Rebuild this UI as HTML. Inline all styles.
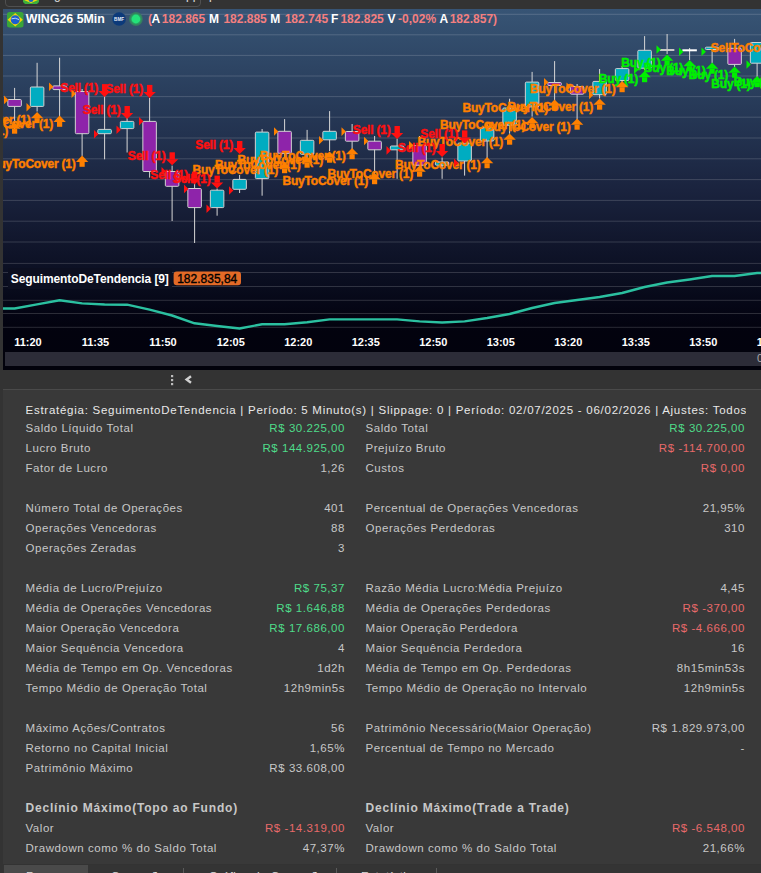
<!DOCTYPE html>
<html><head><meta charset="utf-8">
<style>
*{margin:0;padding:0;box-sizing:border-box}
html,body{width:761px;height:873px;overflow:hidden;background:#333333;font-family:"Liberation Sans",sans-serif}
#top{position:absolute;left:3px;top:0;width:758px;height:9px;background:#333333}
#tab{position:absolute;left:2px;top:-10px;width:195.5px;height:16.5px;border:1px solid #505050;border-radius:0 0 4px 4px}
#chart{position:absolute;left:3px;top:9px;width:758px;height:361px;background:#02020c;overflow:hidden}
#plot{position:absolute;left:0;top:0;width:758px;height:343px;background:linear-gradient(to bottom,rgb(55,84,117) 0%,rgb(53,81,113) 3.8%,rgb(39,58,88) 28.3%,rgb(26,35,62) 52.8%,rgb(15,20,41) 70.8%,rgb(10,14,32) 79%,rgb(5,6,21) 86.9%,rgb(2,2,14) 94%,rgb(2,2,13) 100%)}
#sb{position:absolute;left:2px;top:343px;width:756px;height:14px;background:#2c2c38}
svg{position:absolute;left:0;top:0}
.lb{font:bold 12px "Liberation Sans",sans-serif;letter-spacing:-0.2px;stroke-width:0.45px}
.ib{font:bold 12px "Liberation Sans",sans-serif;letter-spacing:-0.1px}
.bd{font:12px "Liberation Sans",sans-serif;letter-spacing:0px;stroke-width:0.35px}
.tm{font:bold 11px "Liberation Sans",sans-serif}
#title{position:absolute;left:0;top:0;height:20px;width:761px;font:bold 12px "Liberation Sans",sans-serif;white-space:nowrap}
#title span{position:absolute;top:11.5px;line-height:14px}
.wt{color:#ffffff} .sm{color:#f47f7f}
#mid{position:absolute;left:3px;top:370px;width:758px;height:19px;background:#333333}
#sep{position:absolute;left:3px;top:388.9px;width:758px;height:1.2px;background:#4a4a4a}
#rep{position:absolute;left:3px;top:390.1px;width:758px;height:474.4px;background:#393939}
#tabs{position:absolute;left:3px;top:864.5px;width:758px;height:9px;background:#343434}
.rw{position:absolute;left:0;width:761px;height:18px;font-size:11.5px;letter-spacing:0.55px;color:#c8c8c8;white-space:nowrap;line-height:18px}
.rw span{position:absolute;top:0}
.l1{left:25.5px} .l2{left:365.5px}
.v1{right:416px;text-align:right} .v2{right:16px;text-align:right}
.tt{position:absolute;top:4.3px;font-size:11.5px;line-height:14px;color:#dddddd;white-space:nowrap;letter-spacing:0.5px}
.g{color:#4fdc8a} .r{color:#e86a6a} .n{color:#c8c8c8}
b{font-weight:bold;font-size:12px;letter-spacing:0.8px}
#hdr{position:absolute;left:25.5px;top:401.2px;width:720px;height:18px;overflow:hidden;font-size:11.5px;letter-spacing:0.735px;color:#e8e8e8;white-space:nowrap;line-height:18px}
</style></head><body>
<div id="top"><div id="tab"></div>
<svg width="761" height="9" style="left:-3px"><polygon points="23,-4 39,-4 39,2 37,4 25,4 23,2" fill="#3cae3c"/><polygon points="24,0 31,-4 38,0 31,3" fill="#f5d90a"/><circle cx="31" cy="-0.5" r="2.5" fill="#1a5fc8"/><text x="54" y="-1" fill="#e0e0e0" style="font:12px 'Liberation Sans',sans-serif">g</text><text x="186" y="-1" fill="#e0e0e0" style="font:12px 'Liberation Sans',sans-serif">pp</text><text x="209" y="-1" fill="#e0e0e0" style="font:12px 'Liberation Sans',sans-serif">p</text></svg>
</div>
<div id="chart">
<div id="plot"></div>
<div id="sb"></div>
</div>
<svg width="761" height="370" viewBox="0 0 761 370" style="left:0;top:0">
<defs><clipPath id="cp"><rect x="3" y="9" width="758" height="343"/></clipPath></defs>
<g clip-path="url(#cp)">
<rect x="3" y="13.8" width="758" height="1" fill="#ffffff" fill-opacity="0.16"/>
<rect x="3" y="34.3" width="758" height="1" fill="#ffffff" fill-opacity="0.16"/>
<rect x="3" y="54.9" width="758" height="1" fill="#ffffff" fill-opacity="0.16"/>
<rect x="3" y="75.5" width="758" height="1" fill="#ffffff" fill-opacity="0.16"/>
<rect x="3" y="96.1" width="758" height="1" fill="#ffffff" fill-opacity="0.16"/>
<rect x="3" y="116.7" width="758" height="1" fill="#ffffff" fill-opacity="0.16"/>
<rect x="3" y="137.5" width="758" height="1" fill="#ffffff" fill-opacity="0.16"/>
<rect x="3" y="158.3" width="758" height="1" fill="#ffffff" fill-opacity="0.16"/>
<rect x="3" y="179.1" width="758" height="1" fill="#ffffff" fill-opacity="0.16"/>
<rect x="3" y="199.9" width="758" height="1" fill="#ffffff" fill-opacity="0.16"/>
<rect x="3" y="220.7" width="758" height="1" fill="#ffffff" fill-opacity="0.16"/>
<rect x="3" y="241.5" width="758" height="1" fill="#ffffff" fill-opacity="0.16"/>
<rect x="3" y="262.9" width="758" height="1" fill="#ffffff" fill-opacity="0.16"/>
<rect x="3" y="272" width="758" height="1" fill="#ffffff" fill-opacity="0.16"/>
<rect x="3" y="286" width="758" height="1" fill="#ffffff" fill-opacity="0.16"/>
<rect x="3" y="299.8" width="758" height="1" fill="#ffffff" fill-opacity="0.16"/>
<rect x="3" y="313" width="758" height="1" fill="#ffffff" fill-opacity="0.16"/>
<rect x="3" y="326.8" width="758" height="1" fill="#ffffff" fill-opacity="0.16"/>
<rect x="14.1" y="87.9" width="1" height="42.4" fill="#d6d6d6"/>
<rect x="7.85" y="99.5" width="13.5" height="6.9" rx="1" fill="#8e24aa" stroke="#d2d2d2" stroke-width="1"/>
<rect x="36.6" y="62.8" width="1" height="48.7" fill="#d6d6d6"/>
<rect x="30.35" y="87" width="13.5" height="19.4" rx="1" fill="#00acc1" stroke="#d2d2d2" stroke-width="1"/>
<rect x="59.1" y="57.7" width="1" height="58.9" fill="#d6d6d6"/>
<rect x="52.85" y="85.9" width="13.5" height="3.7" rx="1" fill="#8e24aa" stroke="#d2d2d2" stroke-width="1"/>
<rect x="81.6" y="89" width="1" height="66.9" fill="#d6d6d6"/>
<rect x="75.35" y="91.5" width="13.5" height="42.2" rx="1" fill="#8e24aa" stroke="#d2d2d2" stroke-width="1"/>
<rect x="104.1" y="96" width="1" height="63.3" fill="#d6d6d6"/>
<rect x="97.85" y="129.4" width="13.5" height="4.3" rx="1" fill="#00acc1" stroke="#d2d2d2" stroke-width="1"/>
<rect x="126.6" y="117" width="1" height="35.5" fill="#d6d6d6"/>
<rect x="120.35" y="121.4" width="13.5" height="7.2" rx="1" fill="#00acc1" stroke="#d2d2d2" stroke-width="1"/>
<rect x="149.1" y="98" width="1" height="79.6" fill="#d6d6d6"/>
<rect x="142.85" y="121.4" width="13.5" height="50.1" rx="1" fill="#8e24aa" stroke="#d2d2d2" stroke-width="1"/>
<rect x="171.6" y="165.6" width="1" height="55.4" fill="#d6d6d6"/>
<rect x="165.35" y="171.5" width="13.5" height="14.8" rx="1" fill="#8e24aa" stroke="#d2d2d2" stroke-width="1"/>
<rect x="194.1" y="184" width="1" height="59" fill="#d6d6d6"/>
<rect x="187.85" y="188.5" width="13.5" height="19.1" rx="1" fill="#8e24aa" stroke="#d2d2d2" stroke-width="1"/>
<rect x="216.6" y="188.5" width="1" height="27.2" fill="#d6d6d6"/>
<rect x="210.35" y="190.2" width="13.5" height="17.4" rx="1" fill="#00acc1" stroke="#d2d2d2" stroke-width="1"/>
<rect x="239.1" y="175" width="1" height="18" fill="#d6d6d6"/>
<rect x="232.85" y="179.4" width="13.5" height="9.9" rx="1" fill="#00acc1" stroke="#d2d2d2" stroke-width="1"/>
<rect x="261.6" y="129" width="1" height="66.7" fill="#d6d6d6"/>
<rect x="255.35" y="132.1" width="13.5" height="46.5" rx="1" fill="#00acc1" stroke="#d2d2d2" stroke-width="1"/>
<rect x="284.1" y="119.1" width="1" height="38.9" fill="#d6d6d6"/>
<rect x="277.85" y="131.3" width="13.5" height="22" rx="1" fill="#8e24aa" stroke="#d2d2d2" stroke-width="1"/>
<rect x="306.6" y="129.9" width="1" height="28.1" fill="#d6d6d6"/>
<rect x="300.35" y="140.3" width="13.5" height="14" rx="1" fill="#00acc1" stroke="#d2d2d2" stroke-width="1"/>
<rect x="329.1" y="111.1" width="1" height="39.9" fill="#d6d6d6"/>
<rect x="322.85" y="131.3" width="13.5" height="8.5" rx="1" fill="#00acc1" stroke="#d2d2d2" stroke-width="1"/>
<rect x="351.6" y="124" width="1" height="34.3" fill="#d6d6d6"/>
<rect x="345.35" y="131.5" width="13.5" height="9.7" rx="1" fill="#8e24aa" stroke="#d2d2d2" stroke-width="1"/>
<rect x="374.1" y="136" width="1" height="37.7" fill="#d6d6d6"/>
<rect x="367.85" y="141.2" width="13.5" height="8.6" rx="1" fill="#8e24aa" stroke="#d2d2d2" stroke-width="1"/>
<rect x="396.6" y="138.7" width="1" height="40.1" fill="#d6d6d6"/>
<rect x="390.35" y="146" width="13.5" height="3.8" rx="1" fill="#00acc1" stroke="#d2d2d2" stroke-width="1"/>
<rect x="419.1" y="136" width="1" height="32" fill="#d6d6d6"/>
<rect x="412.85" y="145.5" width="13.5" height="19.7" rx="1" fill="#8e24aa" stroke="#d2d2d2" stroke-width="1"/>
<rect x="441.6" y="157.5" width="1" height="21.3" fill="#d6d6d6"/>
<rect x="435.35" y="162" width="13.5" height="3.2" rx="1" fill="#00acc1" stroke="#d2d2d2" stroke-width="1"/>
<rect x="464.1" y="138.8" width="1" height="36.8" fill="#d6d6d6"/>
<rect x="457.85" y="143.1" width="13.5" height="17.9" rx="1" fill="#00acc1" stroke="#d2d2d2" stroke-width="1"/>
<rect x="486.6" y="125" width="1" height="34.3" fill="#d6d6d6"/>
<rect x="480.35" y="127.7" width="13.5" height="13.3" rx="1" fill="#00acc1" stroke="#d2d2d2" stroke-width="1"/>
<rect x="509.1" y="98.7" width="1" height="35" fill="#d6d6d6"/>
<rect x="502.85" y="108" width="13.5" height="17.2" rx="1" fill="#00acc1" stroke="#d2d2d2" stroke-width="1"/>
<rect x="531.6" y="71.9" width="1" height="44.7" fill="#d6d6d6"/>
<rect x="525.35" y="82.1" width="13.5" height="24.8" rx="1" fill="#00acc1" stroke="#d2d2d2" stroke-width="1"/>
<rect x="554.1" y="61.1" width="1" height="39.9" fill="#d6d6d6"/>
<rect x="547.85" y="82.5" width="13.5" height="3" rx="1" fill="#8e24aa" stroke="#d2d2d2" stroke-width="1"/>
<rect x="576.6" y="84" width="1" height="40" fill="#d6d6d6"/>
<rect x="570.35" y="86.5" width="13.5" height="7.7" rx="1" fill="#8e24aa" stroke="#d2d2d2" stroke-width="1"/>
<rect x="599.1" y="69" width="1" height="29.5" fill="#d6d6d6"/>
<rect x="592.85" y="81.4" width="13.5" height="13.3" rx="1" fill="#00acc1" stroke="#d2d2d2" stroke-width="1"/>
<rect x="621.6" y="66" width="1" height="17" fill="#d6d6d6"/>
<rect x="615.35" y="68.6" width="13.5" height="11.9" rx="1" fill="#00acc1" stroke="#d2d2d2" stroke-width="1"/>
<rect x="644.1" y="36.1" width="1" height="33.9" fill="#d6d6d6"/>
<rect x="637.85" y="50.3" width="13.5" height="17.9" rx="1" fill="#00acc1" stroke="#d2d2d2" stroke-width="1"/>
<rect x="666.6" y="34" width="1" height="20" fill="#d6d6d6"/>
<rect x="659.85" y="49" width="14.5" height="2" fill="#c8c8c8"/>
<rect x="689.1" y="48" width="1" height="12" fill="#d6d6d6"/>
<rect x="682.35" y="49.3" width="14.5" height="2" fill="#ffffff"/>
<rect x="711.6" y="46" width="1" height="16.9" fill="#d6d6d6"/>
<rect x="705.35" y="47.2" width="13.5" height="2.3" rx="1" fill="#00acc1" stroke="#d2d2d2" stroke-width="1"/>
<rect x="734.1" y="38.9" width="1" height="28.1" fill="#d6d6d6"/>
<rect x="727.85" y="48.3" width="13.5" height="16.1" rx="1" fill="#8e24aa" stroke="#d2d2d2" stroke-width="1"/>
<rect x="756.6" y="42" width="1" height="35.5" fill="#d6d6d6"/>
<rect x="750.35" y="42.5" width="13.5" height="20.7" rx="1" fill="#00acc1" stroke="#d2d2d2" stroke-width="1"/>
<text x="8.1" y="134.5" text-anchor="end" fill="#ff8000" stroke="#ff8000" class="lb">BuyToCover (1)</text>
<text x="30.6" y="123.9" text-anchor="end" fill="#ff8000" stroke="#ff8000" class="lb">BuyToCover (1)</text>
<text x="53.1" y="127.6" text-anchor="end" fill="#ff8000" stroke="#ff8000" class="lb">BuyToCover (1)</text>
<text x="75.6" y="167.6" text-anchor="end" fill="#ff8000" stroke="#ff8000" class="lb">BuyToCover (1)</text>
<text x="278.1" y="174" text-anchor="end" fill="#ff8000" stroke="#ff8000" class="lb">BuyToCover (1)</text>
<text x="300.6" y="168.5" text-anchor="end" fill="#ff8000" stroke="#ff8000" class="lb">BuyToCover (1)</text>
<text x="323.1" y="163.5" text-anchor="end" fill="#ff8000" stroke="#ff8000" class="lb">BuyToCover (1)</text>
<text x="345.6" y="160" text-anchor="end" fill="#ff8000" stroke="#ff8000" class="lb">BuyToCover (1)</text>
<text x="368.1" y="185" text-anchor="end" fill="#ff8000" stroke="#ff8000" class="lb">BuyToCover (1)</text>
<text x="413.1" y="177.5" text-anchor="end" fill="#ff8000" stroke="#ff8000" class="lb">BuyToCover (1)</text>
<text x="480.6" y="169" text-anchor="end" fill="#ff8000" stroke="#ff8000" class="lb">BuyToCover (1)</text>
<text x="503.1" y="145.5" text-anchor="end" fill="#ff8000" stroke="#ff8000" class="lb">BuyToCover (1)</text>
<text x="525.6" y="129" text-anchor="end" fill="#ff8000" stroke="#ff8000" class="lb">BuyToCover (1)</text>
<text x="548.1" y="111.5" text-anchor="end" fill="#ff8000" stroke="#ff8000" class="lb">BuyToCover (1)</text>
<text x="570.6" y="130.5" text-anchor="end" fill="#ff8000" stroke="#ff8000" class="lb">BuyToCover (1)</text>
<text x="593.1" y="110.5" text-anchor="end" fill="#ff8000" stroke="#ff8000" class="lb">BuyToCover (1)</text>
<text x="615.6" y="93" text-anchor="end" fill="#ff8000" stroke="#ff8000" class="lb">BuyToCover (1)</text>
<text x="638.1" y="83" text-anchor="end" fill="#00f000" stroke="#00f000" class="lb">Buy (1)</text>
<text x="660.6" y="66.5" text-anchor="end" fill="#00f000" stroke="#00f000" class="lb">Buy (1)</text>
<text x="683.1" y="72" text-anchor="end" fill="#00f000" stroke="#00f000" class="lb">Buy (1)</text>
<text x="705.6" y="74.5" text-anchor="end" fill="#00f000" stroke="#00f000" class="lb">Buy (1)</text>
<text x="728.1" y="78.5" text-anchor="end" fill="#00f000" stroke="#00f000" class="lb">Buy (1)</text>
<text x="750.6" y="88" text-anchor="end" fill="#00f000" stroke="#00f000" class="lb">Buy (1)</text>
<text x="773.1" y="86" text-anchor="end" fill="#00f000" stroke="#00f000" class="lb">Buy (1)</text>
<text x="98.1" y="91.9" text-anchor="end" fill="#ff1010" stroke="#ff1010" class="lb">Sell (1)</text>
<text x="120.6" y="113.8" text-anchor="end" fill="#ff1010" stroke="#ff1010" class="lb">Sell (1)</text>
<text x="143.1" y="92.7" text-anchor="end" fill="#ff1010" stroke="#ff1010" class="lb">Sell (1)</text>
<text x="165.6" y="160.1" text-anchor="end" fill="#ff1010" stroke="#ff1010" class="lb">Sell (1)</text>
<text x="188.1" y="179.4" text-anchor="end" fill="#ff1010" stroke="#ff1010" class="lb">Sell (1)</text>
<text x="210.6" y="183.4" text-anchor="end" fill="#ff1010" stroke="#ff1010" class="lb">Sell (1)</text>
<text x="233.1" y="148.8" text-anchor="end" fill="#ff1010" stroke="#ff1010" class="lb">Sell (1)</text>
<text x="390.6" y="133.8" text-anchor="end" fill="#ff1010" stroke="#ff1010" class="lb">Sell (1)</text>
<text x="435.6" y="151.8" text-anchor="end" fill="#ff1010" stroke="#ff1010" class="lb">Sell (1)</text>
<text x="458.1" y="138.2" text-anchor="end" fill="#ff1010" stroke="#ff1010" class="lb">Sell (1)</text>
<text x="710.8" y="52.3" fill="#ff8000" stroke="#ff8000" class="lb">SellToCover (1)</text>
<polygon points="4,95.6 8.4,99.9 4,104.2" fill="#ff8000"/>
<polygon points="26.5,103 30.9,107.3 26.5,111.6" fill="#ff8000"/>
<polygon points="49,82.5 53.4,86.8 49,91.1" fill="#ff8000"/>
<polygon points="71.5,89.4 75.9,93.7 71.5,98" fill="#ff8000"/>
<polygon points="94,130 98.4,134.3 94,138.6" fill="#ff1010"/>
<polygon points="116.5,125.5 120.9,129.8 116.5,134.1" fill="#ff1010"/>
<polygon points="139,117 143.4,121.3 139,125.6" fill="#ff1010"/>
<polygon points="161.5,167 165.9,171.3 161.5,175.6" fill="#ff1010"/>
<polygon points="184,184.6 188.4,188.9 184,193.2" fill="#ff1010"/>
<polygon points="206.5,204.4 210.9,208.7 206.5,213" fill="#ff1010"/>
<polygon points="229,186.2 233.4,190.5 229,194.8" fill="#ff1010"/>
<polygon points="274,127.2 278.4,131.5 274,135.8" fill="#ff8000"/>
<polygon points="319,135.9 323.4,140.2 319,144.5" fill="#ff8000"/>
<polygon points="341.5,127.3 345.9,131.6 341.5,135.9" fill="#ff8000"/>
<polygon points="364,136.7 368.4,141 364,145.3" fill="#ff8000"/>
<polygon points="386.5,146.1 390.9,150.4 386.5,154.7" fill="#ff1010"/>
<polygon points="409,141 413.4,145.3 409,149.6" fill="#ff8000"/>
<polygon points="454,158.6 458.4,162.9 454,167.2" fill="#ff1010"/>
<polygon points="544,78 548.4,82.3 544,86.6" fill="#ff8000"/>
<polygon points="566.5,82.4 570.9,86.7 566.5,91" fill="#ff8000"/>
<polygon points="589,90.7 593.4,95 589,99.3" fill="#ff8000"/>
<polygon points="634,65.5 638.4,69.8 634,74.1" fill="#00f000"/>
<polygon points="656.5,45.2 660.9,49.5 656.5,53.8" fill="#00f000"/>
<polygon points="679,47.5 683.4,51.8 679,56.1" fill="#00f000"/>
<polygon points="701.5,47.5 705.9,51.8 701.5,56.1" fill="#00f000"/>
<polygon points="746.5,60.2 750.9,64.5 746.5,68.8" fill="#00f000"/>
<polygon points="8.4,128.8 14.6,122.5 20.8,128.8" fill="#ff8000"/>
<rect x="12" y="128.7" width="5.2" height="5" fill="#ff8000"/>
<polygon points="30.9,118.2 37.1,111.9 43.3,118.2" fill="#ff8000"/>
<rect x="34.5" y="118.1" width="5.2" height="5" fill="#ff8000"/>
<polygon points="53.4,121.9 59.6,115.6 65.8,121.9" fill="#ff8000"/>
<rect x="57" y="121.8" width="5.2" height="5" fill="#ff8000"/>
<polygon points="75.9,161.9 82.1,155.6 88.3,161.9" fill="#ff8000"/>
<rect x="79.5" y="161.8" width="5.2" height="5" fill="#ff8000"/>
<polygon points="278.4,168.3 284.6,162 290.8,168.3" fill="#ff8000"/>
<rect x="282" y="168.2" width="5.2" height="5" fill="#ff8000"/>
<polygon points="300.9,162.8 307.1,156.5 313.3,162.8" fill="#ff8000"/>
<rect x="304.5" y="162.7" width="5.2" height="5" fill="#ff8000"/>
<polygon points="323.4,157.8 329.6,151.5 335.8,157.8" fill="#ff8000"/>
<rect x="327" y="157.7" width="5.2" height="5" fill="#ff8000"/>
<polygon points="345.9,154.3 352.1,148 358.3,154.3" fill="#ff8000"/>
<rect x="349.5" y="154.2" width="5.2" height="5" fill="#ff8000"/>
<polygon points="368.4,179.3 374.6,173 380.8,179.3" fill="#ff8000"/>
<rect x="372" y="179.2" width="5.2" height="5" fill="#ff8000"/>
<polygon points="413.4,171.8 419.6,165.5 425.8,171.8" fill="#ff8000"/>
<rect x="417" y="171.7" width="5.2" height="5" fill="#ff8000"/>
<polygon points="480.9,163.3 487.1,157 493.3,163.3" fill="#ff8000"/>
<rect x="484.5" y="163.2" width="5.2" height="5" fill="#ff8000"/>
<polygon points="503.4,139.8 509.6,133.5 515.8,139.8" fill="#ff8000"/>
<rect x="507" y="139.7" width="5.2" height="5" fill="#ff8000"/>
<polygon points="525.9,123.3 532.1,117 538.3,123.3" fill="#ff8000"/>
<rect x="529.5" y="123.2" width="5.2" height="5" fill="#ff8000"/>
<polygon points="548.4,105.8 554.6,99.5 560.8,105.8" fill="#ff8000"/>
<rect x="552" y="105.7" width="5.2" height="5" fill="#ff8000"/>
<polygon points="570.9,124.8 577.1,118.5 583.3,124.8" fill="#ff8000"/>
<rect x="574.5" y="124.7" width="5.2" height="5" fill="#ff8000"/>
<polygon points="593.4,104.8 599.6,98.5 605.8,104.8" fill="#ff8000"/>
<rect x="597" y="104.7" width="5.2" height="5" fill="#ff8000"/>
<polygon points="615.9,87.3 622.1,81 628.3,87.3" fill="#ff8000"/>
<rect x="619.5" y="87.2" width="5.2" height="5" fill="#ff8000"/>
<polygon points="638.4,77.3 644.6,71 650.8,77.3" fill="#00f000"/>
<rect x="642" y="77.2" width="5.2" height="5" fill="#00f000"/>
<polygon points="660.9,60.8 667.1,54.5 673.3,60.8" fill="#00f000"/>
<rect x="664.5" y="60.7" width="5.2" height="5" fill="#00f000"/>
<polygon points="683.4,66.3 689.6,60 695.8,66.3" fill="#00f000"/>
<rect x="687" y="66.2" width="5.2" height="5" fill="#00f000"/>
<polygon points="705.9,68.8 712.1,62.5 718.3,68.8" fill="#00f000"/>
<rect x="709.5" y="68.7" width="5.2" height="5" fill="#00f000"/>
<polygon points="728.4,72.8 734.6,66.5 740.8,72.8" fill="#00f000"/>
<rect x="732" y="72.7" width="5.2" height="5" fill="#00f000"/>
<polygon points="750.9,82.3 757.1,76 763.3,82.3" fill="#00f000"/>
<rect x="754.5" y="82.2" width="5.2" height="5" fill="#00f000"/>
<polygon points="773.4,80.3 779.6,74 785.8,80.3" fill="#00f000"/>
<rect x="777" y="80.2" width="5.2" height="5" fill="#00f000"/>
<rect x="102" y="84.1" width="5.4" height="7.1" fill="#ff1010"/>
<polygon points="98.4,91.1 110.8,91.1 104.6,97.1" fill="#ff1010"/>
<rect x="124.5" y="106" width="5.4" height="7.1" fill="#ff1010"/>
<polygon points="120.9,113 133.3,113 127.1,119" fill="#ff1010"/>
<rect x="147" y="84.9" width="5.4" height="7.1" fill="#ff1010"/>
<polygon points="143.4,91.9 155.8,91.9 149.6,97.9" fill="#ff1010"/>
<rect x="169.5" y="152.3" width="5.4" height="7.1" fill="#ff1010"/>
<polygon points="165.9,159.3 178.3,159.3 172.1,165.3" fill="#ff1010"/>
<rect x="192" y="171.6" width="5.4" height="7.1" fill="#ff1010"/>
<polygon points="188.4,178.6 200.8,178.6 194.6,184.6" fill="#ff1010"/>
<rect x="214.5" y="175.6" width="5.4" height="7.1" fill="#ff1010"/>
<polygon points="210.9,182.6 223.3,182.6 217.1,188.6" fill="#ff1010"/>
<rect x="237" y="141" width="5.4" height="7.1" fill="#ff1010"/>
<polygon points="233.4,148 245.8,148 239.6,154" fill="#ff1010"/>
<rect x="394.5" y="126" width="5.4" height="7.1" fill="#ff1010"/>
<polygon points="390.9,133 403.3,133 397.1,139" fill="#ff1010"/>
<rect x="439.5" y="144" width="5.4" height="7.1" fill="#ff1010"/>
<polygon points="435.9,151 448.3,151 442.1,157" fill="#ff1010"/>
<rect x="462" y="130.4" width="5.4" height="7.1" fill="#ff1010"/>
<polygon points="458.4,137.4 470.8,137.4 464.6,143.4" fill="#ff1010"/>
<rect x="8" y="268" width="164" height="21" fill="#0c0f20"/>
<text x="10.8" y="283" fill="#ffffff" class="ib">SeguimentoDeTendencia [9]</text>
<rect x="173.6" y="271.5" width="67.4" height="13.8" rx="3.2" fill="#e36a27"/>
<text x="177.2" y="282.6" fill="#000000" stroke="#000000" class="bd">182.835,84</text>
<polyline points="3,308.5 14.6,308.5 37.1,304.4 59.6,300.2 82.1,303.4 104.6,304.5 127.1,304.7 149.6,309.7 172.1,315.5 194.6,323.3 217.1,326 239.6,328.5 262.1,324.2 284.6,324.2 307.1,322.3 329.6,319.4 352.1,319.4 374.6,319.4 397.1,319.4 419.6,321.4 442.1,322.5 464.6,321.4 487.1,318 509.6,314 532.1,308 554.6,303 577.1,300 599.6,297 622.1,293 644.6,287 667.1,282.5 689.6,279.5 712.1,276 734.6,276 757.1,273 779.6,273" fill="none" stroke="#2bc0a0" stroke-width="2.4" stroke-linejoin="round"/>
<text x="14.2" y="345.8" fill="#ffffff" class="tm">11:20</text>
<text x="81.7" y="345.8" fill="#ffffff" class="tm">11:35</text>
<text x="149.2" y="345.8" fill="#ffffff" class="tm">11:50</text>
<text x="216.7" y="345.8" fill="#ffffff" class="tm">12:05</text>
<text x="284.2" y="345.8" fill="#ffffff" class="tm">12:20</text>
<text x="351.7" y="345.8" fill="#ffffff" class="tm">12:35</text>
<text x="419.2" y="345.8" fill="#ffffff" class="tm">12:50</text>
<text x="486.7" y="345.8" fill="#ffffff" class="tm">13:05</text>
<text x="554.2" y="345.8" fill="#ffffff" class="tm">13:20</text>
<text x="621.7" y="345.8" fill="#ffffff" class="tm">13:35</text>
<text x="689.2" y="345.8" fill="#ffffff" class="tm">13:50</text>
<text x="756.7" y="345.8" fill="#ffffff" class="tm">14:05</text>
</g>
<text x="757" y="362" fill="#aaaaaa" style="font:11px 'Liberation Sans',sans-serif">0</text>
<rect x="7" y="12" width="16.5" height="15.5" rx="2.5" fill="#3aa53a"/>
<polygon points="7.6,19.75 15.25,12.9 22.9,19.75 15.25,26.6" fill="#f2d40c"/>
<circle cx="15.25" cy="19.75" r="4.5" fill="#1d5fcf"/>
<path d="M11.5,18.8 Q15.2,17.2 19,19.6" stroke="#e8f0ff" stroke-width="0.8" fill="none"/>
<circle cx="119.1" cy="19" r="6.8" fill="#0c3a7a"/>
<text x="119.1" y="20.8" fill="#e8eef8" text-anchor="middle" style="font:bold 4.6px 'Liberation Sans',sans-serif">BMF</text>
<circle cx="135.9" cy="19" r="6.9" fill="#367d60"/>
<circle cx="135.9" cy="19" r="5.6" fill="#2c9a62"/>
<circle cx="135.9" cy="19" r="4.4" fill="#24e27a"/>
</svg>
<div id="title">
<span class="wt" style="left:25.7px;font-size:12.4px">WING26 5Min</span>
<span class="sm" style="left:148.1px">(</span><span class="wt" style="left:151.5px">A</span>
<span class="sm" style="left:161.8px">182.865</span>
<span class="wt" style="left:208.9px">M</span>
<span class="sm" style="left:223.4px">182.885</span>
<span class="wt" style="left:270.3px">M</span>
<span class="sm" style="left:284.7px">182.745</span>
<span class="wt" style="left:331.1px">F</span>
<span class="sm" style="left:340.4px">182.825</span>
<span class="wt" style="left:387.6px">V</span>
<span class="sm" style="left:398.1px">-0,02%</span>
<span class="wt" style="left:439.5px">A</span>
<span class="sm" style="left:449.7px">182.857)</span>
</div>
<div id="mid"></div>
<svg width="761" height="390" style="left:0;top:0">
<rect x="171" y="375" width="2.2" height="2.2" fill="#bdbdbd"/>
<rect x="171" y="379" width="2.2" height="2.2" fill="#bdbdbd"/>
<rect x="171" y="383" width="2.2" height="2.2" fill="#bdbdbd"/>
<polyline points="191,376.2 186.6,379.5 191,382.8" fill="none" stroke="#d0d0d0" stroke-width="2.4"/>
</svg>
<div id="sep"></div>
<div id="rep"></div>
<div id="hdr">Estratégia: SeguimentoDeTendencia | Período: 5 Minuto(s) | Slippage: 0 | Período: 02/07/2025 - 06/02/2026 | Ajustes: Todos</div>
<div class="rw" style="top:419.2px"><span class="l1">Saldo Líquido Total</span><span class="v1 g">R$ 30.225,00</span><span class="l2">Saldo Total</span><span class="v2 g">R$ 30.225,00</span></div>
<div class="rw" style="top:439.2px"><span class="l1">Lucro Bruto</span><span class="v1 g">R$ 144.925,00</span><span class="l2">Prejuízo Bruto</span><span class="v2 r">R$ -114.700,00</span></div>
<div class="rw" style="top:459.2px"><span class="l1">Fator de Lucro</span><span class="v1 n">1,26</span><span class="l2">Custos</span><span class="v2 r">R$ 0,00</span></div>
<div class="rw" style="top:499.2px"><span class="l1">Número Total de Operações</span><span class="v1 n">401</span><span class="l2">Percentual de Operações Vencedoras</span><span class="v2 n">21,95%</span></div>
<div class="rw" style="top:519.2px"><span class="l1">Operações Vencedoras</span><span class="v1 n">88</span><span class="l2">Operações Perdedoras</span><span class="v2 n">310</span></div>
<div class="rw" style="top:539.2px"><span class="l1">Operações Zeradas</span><span class="v1 n">3</span></div>
<div class="rw" style="top:579.2px"><span class="l1">Média de Lucro/Prejuízo</span><span class="v1 g">R$ 75,37</span><span class="l2">Razão Média Lucro:Média Prejuízo</span><span class="v2 n">4,45</span></div>
<div class="rw" style="top:599.2px"><span class="l1">Média de Operações Vencedoras</span><span class="v1 g">R$ 1.646,88</span><span class="l2">Média de Operações Perdedoras</span><span class="v2 r">R$ -370,00</span></div>
<div class="rw" style="top:619.2px"><span class="l1">Maior Operação Vencedora</span><span class="v1 g">R$ 17.686,00</span><span class="l2">Maior Operação Perdedora</span><span class="v2 r">R$ -4.666,00</span></div>
<div class="rw" style="top:639.2px"><span class="l1">Maior Sequência Vencedora</span><span class="v1 n">4</span><span class="l2">Maior Sequência Perdedora</span><span class="v2 n">16</span></div>
<div class="rw" style="top:659.2px"><span class="l1">Média de Tempo em Op. Vencedoras</span><span class="v1 n">1d2h</span><span class="l2">Média de Tempo em Op. Perdedoras</span><span class="v2 n">8h15min53s</span></div>
<div class="rw" style="top:679.2px"><span class="l1">Tempo Médio de Operação Total</span><span class="v1 n">12h9min5s</span><span class="l2">Tempo Médio de Operação no Intervalo</span><span class="v2 n">12h9min5s</span></div>
<div class="rw" style="top:719.2px"><span class="l1">Máximo Ações/Contratos</span><span class="v1 n">56</span><span class="l2">Patrimônio Necessário(Maior Operação)</span><span class="v2 n">R$ 1.829.973,00</span></div>
<div class="rw" style="top:739.2px"><span class="l1">Retorno no Capital Inicial</span><span class="v1 n">1,65%</span><span class="l2">Percentual de Tempo no Mercado</span><span class="v2 n">-</span></div>
<div class="rw" style="top:759.2px"><span class="l1">Patrimônio Máximo</span><span class="v1 n">R$ 33.608,00</span></div>
<div class="rw" style="top:799.2px"><span class="l1"><b>Declínio Máximo(Topo ao Fundo)</b></span><span class="l2"><b>Declínio Máximo(Trade a Trade)</b></span></div>
<div class="rw" style="top:819.2px"><span class="l1">Valor</span><span class="v1 r">R$ -14.319,00</span><span class="l2">Valor</span><span class="v2 r">R$ -6.548,00</span></div>
<div class="rw" style="top:839.2px"><span class="l1">Drawdown como % do Saldo Total</span><span class="v1 n">47,37%</span><span class="l2">Drawdown como % do Saldo Total</span><span class="v2 n">21,66%</span></div>
<div id="tabs">
<div style="position:absolute;left:1px;top:0;width:84px;height:9px;background:#4a4a4a"></div>
<div style="position:absolute;left:180px;top:3px;width:1px;height:6px;background:#5a5a5a"></div>
<div style="position:absolute;left:333px;top:3px;width:1px;height:6px;background:#5a5a5a"></div>
<div style="position:absolute;left:433px;top:3px;width:1px;height:6px;background:#5a5a5a"></div>
<div class="tt" style="left:23px">Resumo</div>
<div class="tt" style="left:108px">Operações</div>
<div class="tt" style="left:206px">Gráfico de Operações</div>
<div class="tt" style="left:358px">Estatísticas</div>
</div>
</body></html>
